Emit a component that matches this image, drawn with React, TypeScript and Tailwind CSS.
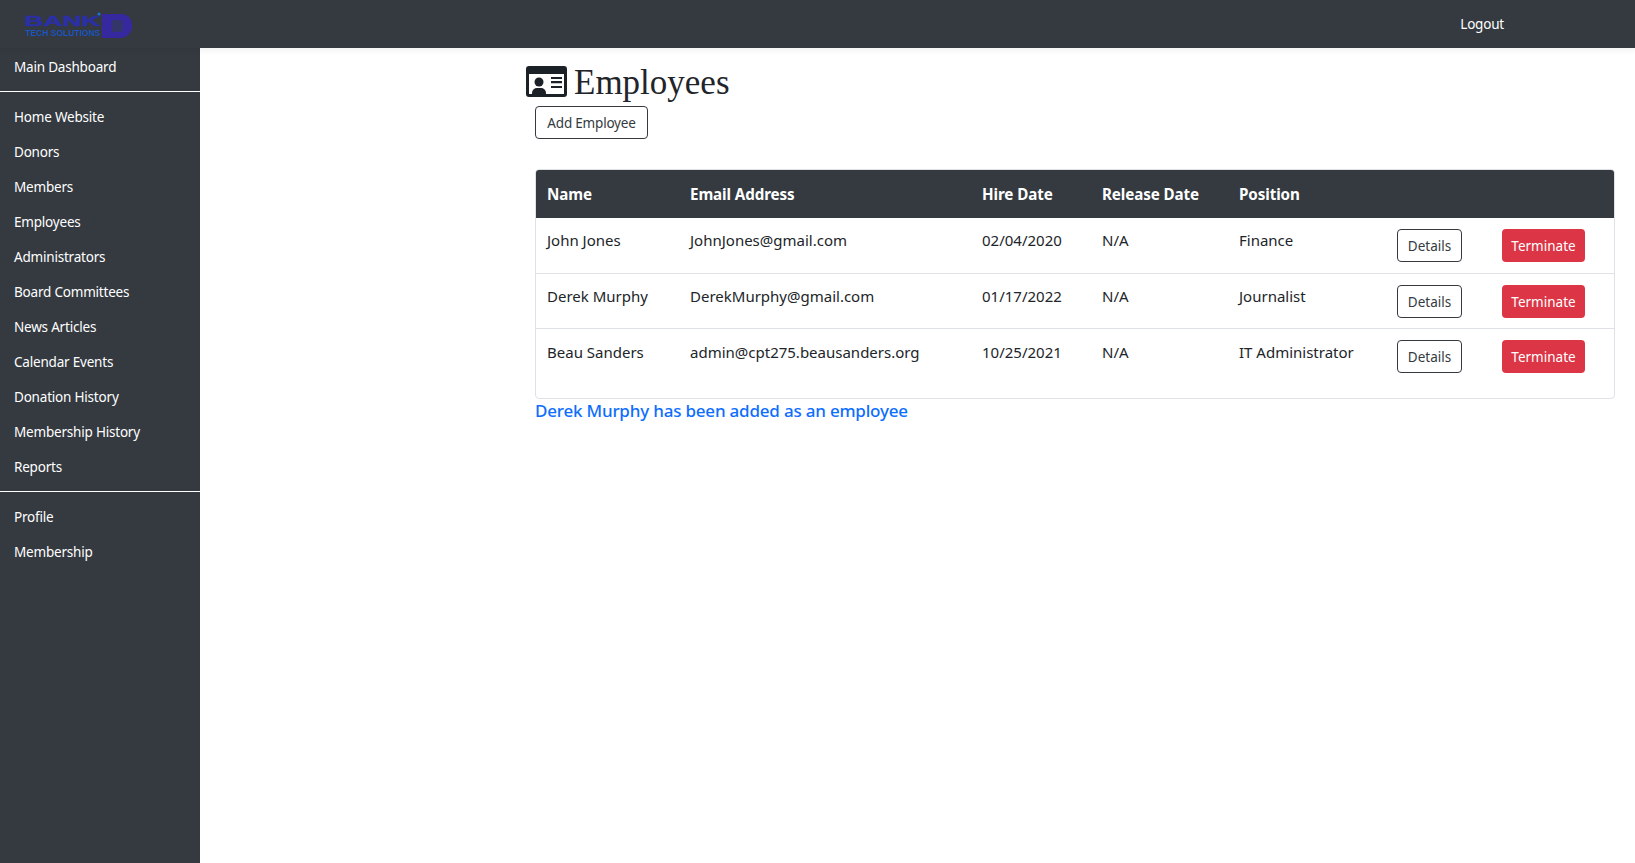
import React from "react";

const font = { fontFamily: '"Noto Sans", sans-serif' };

const topLinks = ["Home Website", "Donors", "Members", "Employees", "Administrators", "Board Committees", "News Articles", "Calendar Events", "Donation History", "Membership History", "Reports"];
const bottomLinks = ["Profile", "Membership"];
const rows = [
  { name: "John Jones", email: "JohnJones@gmail.com", hire: "02/04/2020", pos: "Finance", h: "h-[55px]", pt: "pt-[11px]" },
  { name: "Derek Murphy", email: "DerekMurphy@gmail.com", hire: "01/17/2022", pos: "Journalist", h: "h-[55px]", pt: "pt-[11px]" },
  { name: "Beau Sanders", email: "admin@cpt275.beausanders.org", hire: "10/25/2021", pos: "IT Administrator", h: "h-[69px]", pt: "pt-[12px]" },
];

function Logo() {
  return (
    <svg width="110" height="28" viewBox="0 0 110 28" className="block blur-[0.4px]">
      <path d="M78 4h20a10 10 0 0 1 10 10v2a12 12 0 0 1-12 12H78z" fill="#36289f" />
      <path d="M88 10h7a4 4 0 0 1 4 4v4a4 4 0 0 1-4 4h-7z" fill="#34366a" />
      <text x="0" y="16" fontFamily="Liberation Sans, sans-serif" fontWeight="700" fontSize="14" fill="#2c30a6" stroke="#2c30a6" strokeWidth="0.5" textLength="76" lengthAdjust="spacingAndGlyphs">BANK</text>
      <text x="1" y="26" fontFamily="Liberation Sans, sans-serif" fontWeight="700" fontSize="8.5" fill="#1c55c4" textLength="75" lengthAdjust="spacingAndGlyphs">TECH SOLUTIONS</text>
      <circle cx="75" cy="4" r="1.6" fill="#1c6fd0" />
    </svg>
  );
}

function CardIcon() {
  return (
    <svg width="41" height="31" viewBox="0 0 41 31" className="block shrink-0 mb-[2px]">
      <path fillRule="evenodd" clipRule="evenodd" d="M3 0h35a3 3 0 0 1 3 3v25a3 3 0 0 1-3 3H3a3 3 0 0 1-3-3V3a3 3 0 0 1 3-3zM3 8v20h35V8z" fill="#1c2128" />
      <circle cx="13" cy="16" r="4.5" fill="#1c2128" />
      <path d="M6 31v-4a5 5 0 0 1 5-5h4a5 5 0 0 1 5 5v4z" fill="#1c2128" />
      <path d="M25 11h11v2H25zM25 15h11v2.200H25zM25 20h11v2H25z" fill="#1c2128" />
    </svg>
  );
}

function NavLink({ label }: { label: string }) {
  return <div className="h-[35px] pl-[14px] flex items-center text-white text-[13.5px] whitespace-nowrap tracking-[-0.2px]">{label}</div>;
}

export default function App() {
  return (
    <div style={font} className="w-[1635px] h-[863px] flex flex-col overflow-hidden bg-white text-[#212529]">
      <header className="h-[48px] shrink-0 bg-[#343a40] flex items-center justify-between pl-[24px] pr-[131px] relative z-10 shadow-[0_4px_4px_rgba(0,0,0,0.04)]">
        <Logo />
        <span className="text-white text-[13.5px] tracking-[-0.2px]">Logout</span>
      </header>
      <div className="flex flex-1 min-h-0">
        <aside className="w-[200px] shrink-0 bg-[#343a40]">
          <div className="h-[44px] pl-[14px] pt-[9px] text-white text-[13.5px] leading-[20px] tracking-[-0.2px] border-b border-white">Main Dashboard</div>
          <div className="pt-[8px] pb-[6px] border-b border-white">
            {topLinks.map((l) => <NavLink key={l} label={l} />)}
          </div>
          <div className="pt-[8px]">
            {bottomLinks.map((l) => <NavLink key={l} label={l} />)}
          </div>
        </aside>
        <main className="flex-1 min-w-0 pl-[326px] pr-[20px] pt-[16px]">
          <h1 className="flex items-center h-[36px] gap-[7px] text-[35px] leading-none text-[#212529]" style={{ fontFamily: '"Liberation Serif", serif' }}>
            <CardIcon />
            <span>Employees</span>
          </h1>
          <div className="pl-[9px] mt-[6px]">
            <button className="h-[33px] w-[113px] pt-[2px] rounded-[4px] border border-[#343a40] text-[13.5px] text-[#343a40] bg-white tracking-[-0.2px]">Add Employee</button>
            <div className="mt-[30px] w-[1080px] border border-[#dee2e6] rounded-[4px] overflow-hidden h-[230px]">
              <table className="w-full table-fixed border-collapse text-[15px]">
                <colgroup>
                  <col className="w-[143px]" />
                  <col className="w-[292px]" />
                  <col className="w-[120px]" />
                  <col className="w-[137px]" />
                  <col className="w-[158px]" />
                  <col className="w-[105px]" />
                  <col />
                </colgroup>
                <thead>
                  <tr className="h-[48px] bg-[#343a40] text-white text-left font-bold text-[15.2px] tracking-[-0.1px]">
                    <th className="pl-[11px]">Name</th>
                    <th className="pl-[11px]">Email Address</th>
                    <th className="pl-[11px]">Hire Date</th>
                    <th className="pl-[11px]">Release Date</th>
                    <th className="pl-[11px]">Position</th>
                    <th />
                    <th />
                  </tr>
                </thead>
                <tbody>
                  {rows.map((r, i) => (
                    <tr key={r.name} className={`${r.h} ${i < 2 ? "border-b border-[#dee2e6]" : ""} align-top`}>
                      <td className={`pl-[11px] ${r.pt}`}>{r.name}</td>
                      <td className={`pl-[11px] ${r.pt}`}>{r.email}</td>
                      <td className={`pl-[11px] ${r.pt}`}>{r.hire}</td>
                      <td className={`pl-[11px] ${r.pt}`}>N/A</td>
                      <td className={`pl-[11px] ${r.pt} whitespace-nowrap`}>{r.pos}</td>
                      <td className="pl-[11px] pt-[11px]">
                        <button className="h-[33px] w-[65px] pt-[2px] rounded-[4px] border border-[#343a40] text-[13.5px] text-[#343a40] bg-white">Details</button>
                      </td>
                      <td className="pl-[11px] pt-[11px]">
                        <button className="h-[33px] w-[83px] pt-[2px] rounded-[4px] bg-[#dc3545] text-white text-[13.5px]">Terminate</button>
                      </td>
                    </tr>
                  ))}
                </tbody>
              </table>
            </div>
            <p className="h-[24px] leading-[24px] text-[17px] font-medium text-[#0d6efd] tracking-[-0.2px]">Derek Murphy has been added as an employee</p>
          </div>
        </main>
      </div>
    </div>
  );
}
